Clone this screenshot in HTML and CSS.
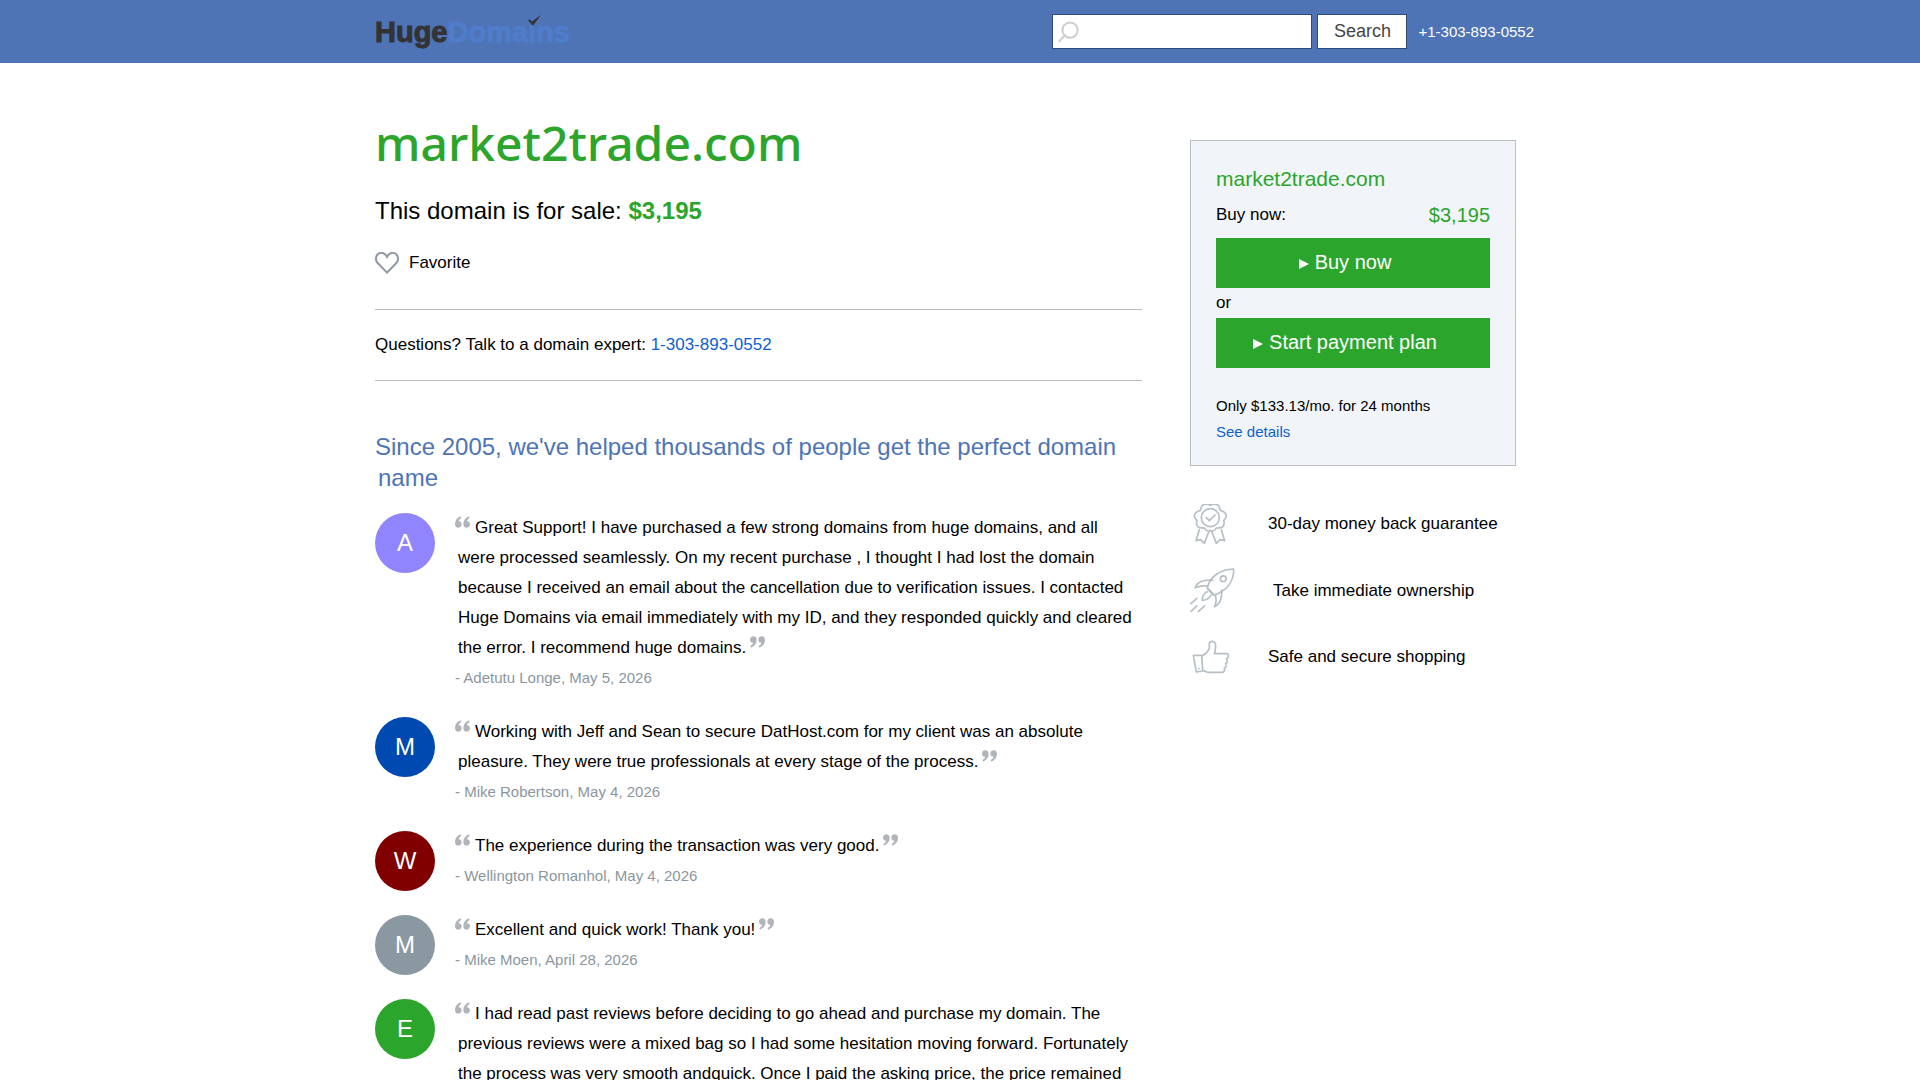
FILE: index.html
```html
<!DOCTYPE html>
<html lang="en">
<head>
  <meta charset="UTF-8" />
  <meta name="viewport" content="width=device-width, initial-scale=1.0" />
  <title>market2trade.com is for sale | HugeDomains</title>
  <link rel="stylesheet" href="styles.css">
</head>
<body>
  <svg class="sprite" aria-hidden="true">
    <symbol id="quote-open" viewBox="0 0 45 36">
      <path d="M17 1C6 5 0 14 0 24c0 7 4 11 10 11s10-4 10-10-4-9-9-9c0-4 3-7 8-10zM42 1C31 5 25 14 25 24c0 7 4 11 10 11s10-4 10-10-4-9-9-9c0-4 3-7 8-10z" />
    </symbol>
    <symbol id="quote-close" viewBox="0 0 45 36">
      <path d="M3 35C14 31 20 22 20 12 20 5 16 1 10 1S0 5 0 11s4 9 9 9c0 4-3 7-8 10zM28 35c11-4 17-13 17-23 0-7-4-11-10-11s-10 4-10 10 4 9 9 9c0 4-3 7-8 10z" />
    </symbol>
  </svg>

  <header class="site-header">
    <div class="container header-inner">
      <a class="logo" href="#"><span class="logo-dark">Huge</span>Domains<svg class="logo-check" viewBox="0 0 40 34"><path d="M0 16l5-3 7 7L40 0 15 33z" /></svg></a>
      <form class="search">
        <div class="search-field">
          <svg class="search-icon" viewBox="0 0 66 68"><circle cx="38" cy="28" r="24" /><path d="M21 45L2 65" /></svg>
          <input type="text" class="search-input" aria-label="Search domains" />
        </div>
        <button type="button" class="search-btn">Search</button>
        <a class="header-phone" href="tel:+13038930552">+1-303-893-0552</a>
      </form>
    </div>
  </header>

  <div class="container content">
    <main class="main">
      <h1>market2trade.com</h1>
      <p class="sale">This domain is for sale: <b>$3,195</b></p>
      <button type="button" class="favorite">
        <svg viewBox="0 0 72 66"><path d="M36 62L8 33C1 25 1 13 9 6c8-6 19-4 24 4l3 5 3-5c5-8 16-10 24-4 8 7 8 19 1 27z" /></svg>
        Favorite
      </button>
      <p class="questions">Questions? Talk to a domain expert: <a href="tel:13038930552">1-303-893-0552</a></p>

      <h2>Since 2005, we've helped thousands of people get the perfect domain name</h2>

      <article class="review">
        <div class="avatar avatar-violet">A</div>
        <div>
          <p class="review-text"><svg class="quote quote-open"><use href="#quote-open" /></svg>Great Support! I have purchased a few strong domains from huge domains, and all<br>were processed seamlessly. On my recent purchase , I thought I had lost the domain<br>because I received an email about the cancellation due to verification issues. I contacted<br>Huge Domains via email immediately with my ID, and they responded quickly and cleared<br>the error. I recommend huge domains.<svg class="quote quote-close"><use href="#quote-close" /></svg></p>
          <p class="review-author">- Adetutu Longe, May 5, 2026</p>
        </div>
      </article>

      <article class="review">
        <div class="avatar avatar-blue">M</div>
        <div>
          <p class="review-text"><svg class="quote quote-open"><use href="#quote-open" /></svg>Working with Jeff and Sean to secure DatHost.com for my client was an absolute<br>pleasure. They were true professionals at every stage of the process.<svg class="quote quote-close"><use href="#quote-close" /></svg></p>
          <p class="review-author">- Mike Robertson, May 4, 2026</p>
        </div>
      </article>

      <article class="review">
        <div class="avatar avatar-maroon">W</div>
        <div>
          <p class="review-text"><svg class="quote quote-open"><use href="#quote-open" /></svg>The experience during the transaction was very good.<svg class="quote quote-close"><use href="#quote-close" /></svg></p>
          <p class="review-author">- Wellington Romanhol, May 4, 2026</p>
        </div>
      </article>

      <article class="review">
        <div class="avatar avatar-gray">M</div>
        <div>
          <p class="review-text"><svg class="quote quote-open"><use href="#quote-open" /></svg>Excellent and quick work! Thank you!<svg class="quote quote-close"><use href="#quote-close" /></svg></p>
          <p class="review-author">- Mike Moen, April 28, 2026</p>
        </div>
      </article>

      <article class="review">
        <div class="avatar avatar-green">E</div>
        <div>
          <p class="review-text"><svg class="quote quote-open"><use href="#quote-open" /></svg>I had read past reviews before deciding to go ahead and purchase my domain. The<br>previous reviews were a mixed bag so I had some hesitation moving forward. Fortunately<br>the process was very smooth andquick. Once I paid the asking price, the price remained</p>
        </div>
      </article>
    </main>

    <aside class="sidebar">
      <section class="buy-box">
        <div class="buy-domain">market2trade.com</div>
        <div class="buy-row">
          <span>Buy now:</span>
          <span class="buy-price">$3,195</span>
        </div>
        <button type="button" class="btn"><span class="arrow"></span>Buy now</button>
        <div class="or">or</div>
        <button type="button" class="btn"><span class="arrow"></span>Start payment plan</button>
        <p class="plan">Only $133.13/mo. for 24 months<br><a href="#">See details</a></p>
      </section>

      <ul class="perks">
        <li>
          <svg viewBox="30 42 120 120">
            <path d="M91 46C99 41 109 42 115 46 119 50 119 56 121 61 128 63 137 68 139 76 140 83 133 87 131 92 134 98 132 107 127 111 121 115 113 112 108 115 103 123 96 125 91 121 86 125 79 123 74 115 69 112 61 115 55 111 50 107 48 98 51 92 49 87 42 83 43 76 45 68 54 63 61 61 63 56 63 50 67 46 73 42 83 41 91 46z" />
            <circle cx="91" cy="83" r="27" />
            <path d="M79 83l9 9 17-17M58 119l-10 33 14-3 11 11 13-34M124 119l10 33-14-3-11 11-13-34" />
          </svg>
          30-day money back guarantee
        </li>
        <li>
          <svg class="icon-rocket" viewBox="29 238 138 138">
            <path d="M163 241C121 242 89 266 82 299L104 321C137 309 164 283 163 241z" />
            <circle cx="131" cy="271" r="9" />
            <path d="M99 276C70 272 50 282 45 299 57 293 69 291 83 294M126 306C128 333 118 350 104 357 110 344 111 333 106 320M84 304L100 321M82 311C72 315 67 324 66 337 78 337 88 331 93 322M32 347L50 331M32 371L50 354M55 371L74 354" />
          </svg>
          Take immediate ownership
        </li>
        <li>
          <svg viewBox="30 438 120 120">
            <path d="M40 493H65L68 540 49 543zM66 494C75 490 85 480 88 471V459C88 450 103 448 106 457 108 466 106 478 103 488H143C148 493 145 502 139 503 144 509 141 517 137 518 140 525 138 529 133 531 135 538 132 544 127 544H84C78 544 74 539 68 538" />
            <path d="M57 533v1" />
          </svg>
          Safe and secure shopping
        </li>
      </ul>
    </aside>
  </div>
</body>
</html>
```
FILE: styles.css
```css
:root {
  --blue: #4e74b6;
  --green: #2ba52b;
  --link: #0c62d1;
  --line: #b9bdc1;
  --muted: #8a96a0;
}

* {
  box-sizing: border-box;
}

body {
  margin: 0;
  background: #fff;
  color: #000;
  font-family: "Liberation Sans", Arial, sans-serif;
  font-size: 17px;
  line-height: 30px;
}

h1, h2, p, ul {
  margin: 0;
  padding: 0;
}

a {
  color: var(--link);
  text-decoration: none;
}

button {
  font-family: inherit;
  cursor: pointer;
}

svg {
  flex: none;
}

.sprite {
  display: none;
}

.container {
  width: 100%;
  max-width: 1170px;
  margin: 0 auto;
}

/* Header */
.site-header {
  background: var(--blue);
}

.header-inner {
  display: flex;
  align-items: center;
  justify-content: space-between;
  height: 63px;
  padding-right: 11px;
}

.logo {
  position: relative;
  color: #4f7ccb;
  font-size: 29px;
  font-weight: bold;
  -webkit-text-stroke: 1px;
}

.logo-dark {
  color: #333;
}

.logo-check {
  position: absolute;
  top: -2px;
  right: 29px;
  width: 13px;
  height: 11px;
  fill: #333;
}

.search {
  display: flex;
  align-items: center;
}

.search-field {
  position: relative;
  margin-right: 5px;
}

.search-icon {
  position: absolute;
  top: 7px;
  left: 6px;
  width: 21px;
  height: 22px;
  fill: none;
  stroke: #ccc;
  stroke-width: 6;
}

.search-input {
  display: block;
  width: 260px;
  height: 35px;
  padding: 0 8px 0 34px;
  border: 1px solid #2f4b7b;
  font-size: 17px;
}

.search-btn {
  width: 90px;
  height: 35px;
  margin-right: 11px;
  padding: 0;
  border: 1px solid #2f4b7b;
  background: #fff;
  color: #444;
  font-size: 18px;
}

.header-phone {
  color: #fff;
  font-size: 15px;
}

/* Layout */
.content {
  display: flex;
  justify-content: space-between;
  padding-right: 29px;
}

.main {
  flex: 0 1 767px;
  padding-top: 50px;
}

.sidebar {
  flex: 0 0 326px;
  padding-top: 77px;
}

h1 {
  color: var(--green);
  font-family: "Noto Sans", "Open Sans", sans-serif;
  font-size: 48px;
  font-weight: 500;
  line-height: 60px;
}

.sale {
  margin-top: 23px;
  font-size: 24px;
}

.sale b {
  color: var(--green);
}

.favorite {
  display: flex;
  align-items: center;
  gap: 10px;
  margin-top: 22px;
  padding: 0;
  border: 0;
  background: none;
  color: #000;
  font-size: 17px;
  line-height: 30px;
}

.favorite svg {
  width: 24px;
  height: 22px;
  fill: none;
  stroke: #8f98a3;
  stroke-width: 6;
}

.questions {
  margin-top: 31px;
  padding: 20px 0;
  border-top: 1px solid var(--line);
  border-bottom: 1px solid var(--line);
}

h2 {
  margin: 50px 0 20px;
  padding-left: 3px;
  color: var(--blue);
  font-size: 24px;
  font-weight: normal;
  line-height: 31px;
  text-indent: -3px;
}

/* Reviews */
.review {
  display: flex;
  gap: 20px;
  margin-bottom: 24px;
}

.avatar {
  flex: none;
  width: 60px;
  height: 60px;
  border-radius: 50%;
  color: #fff;
  font-size: 24px;
  line-height: 60px;
  text-align: center;
}

.avatar-violet { background: #9184ff; }
.avatar-blue { background: #0049b0; }
.avatar-maroon { background: #800000; }
.avatar-gray { background: #8a98a2; }
.avatar-green { background: var(--green); }

.review-text {
  padding-left: 3px;
  text-indent: -3px;
}

.quote {
  width: 15px;
  height: 12px;
  fill: #b1b5bb;
  vertical-align: 5px;
}

.quote-open {
  margin-right: 5px;
}

.quote-close {
  margin-left: 4px;
}

.review-author {
  color: var(--muted);
  font-size: 15px;
}

/* Buy box */
.buy-box {
  padding: 23px 25px 20px;
  border: 1px solid var(--line);
  background: #f1f5f9;
}

.buy-domain {
  color: var(--green);
  font-size: 21px;
}

.buy-row {
  display: flex;
  justify-content: space-between;
  margin: 6px 0 8px;
}

.buy-price {
  color: var(--green);
  font-size: 20px;
}

.btn {
  display: flex;
  align-items: center;
  justify-content: center;
  gap: 6px;
  width: 100%;
  height: 50px;
  padding: 0 16px 2px 0;
  border: 0;
  background: var(--green);
  color: #fff;
  font-size: 20px;
}

.arrow {
  margin-top: 3px;
  border-top: 5px solid transparent;
  border-bottom: 5px solid transparent;
  border-left: 10px solid #fff;
}

.plan {
  margin-top: 25px;
  font-size: 15px;
  line-height: 26px;
}

/* Perks */
.perks {
  display: flex;
  flex-direction: column;
  gap: 24px;
  margin-top: 38px;
  list-style: none;
}

.perks li {
  display: flex;
  align-items: center;
  gap: 38px;
}

.perks svg {
  width: 40px;
  height: 40px;
  fill: none;
  stroke: #b5bfc6;
  stroke-width: 5;
  stroke-linecap: round;
  stroke-linejoin: round;
}

.perks .icon-rocket {
  width: 45px;
  height: 45px;
}
```
